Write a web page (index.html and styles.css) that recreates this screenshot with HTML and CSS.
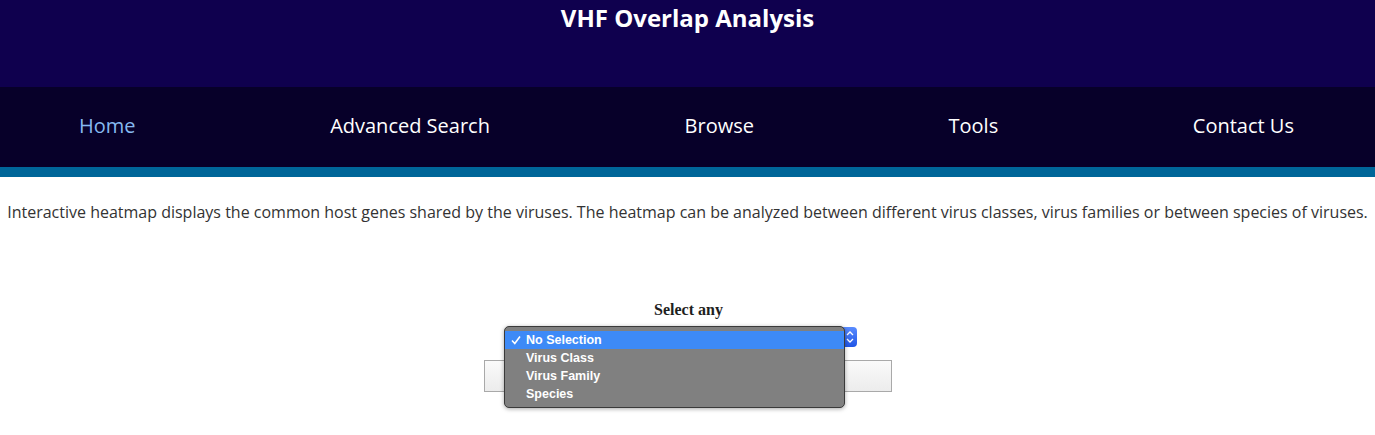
FILE: index.html
```html
<!DOCTYPE html>
<html lang="en">
<head>
    <meta charset="UTF-8">
    <meta name="viewport" content="width=device-width, initial-scale=1.0">
    <title>VHF Overlap Analysis</title>
    <link rel="stylesheet" href="styles.css">
</head>
<body>
    <header class="top">
        <h1>VHF Overlap Analysis</h1>
    </header>
    <nav class="menu">
        <a href="#" class="active">Home</a>
        <a href="#">Advanced Search</a>
        <a href="#">Browse</a>
        <a href="#">Tools</a>
        <a href="#">Contact Us</a>
    </nav>

    <p class="intro">Interactive heatmap displays the common host genes shared by the viruses. The heatmap can be analyzed between different virus classes, virus families or between species of viruses.</p>

    <div class="picker">
        <h4>Select any</h4>
        <div class="select">
            <span class="stepper">
                <svg width="8" height="14" viewBox="0 0 8 14">
                    <path d="M1 5 L4 2 L7 5 M1 9 L4 12 L7 9" fill="none" stroke="#fff" stroke-width="1.3"/>
                </svg>
            </span>
            <!-- open dropdown -->
            <ul class="options">
                <li class="checked">
                    <svg class="tick" width="10" height="10" viewBox="0 0 10 10">
                        <path d="M1 5.5 L3.8 8.5 L9 1.5" fill="none" stroke="#fff" stroke-width="1.6"/>
                    </svg>
                    No Selection
                </li>
                <li>Virus Class</li>
                <li>Virus Family</li>
                <li>Species</li>
            </ul>
        </div>
        <div class="result"></div>
    </div>
</body>
</html>
```

FILE: styles.css
```css
*{
    margin: 0;
    padding: 0;
    box-sizing: border-box;
}
body{
    font-family: "Open Sans", sans-serif;
    color: #333;
    background: #fff;
    min-height: 100vh;
}
.top{
    height: 87px;
    background-color: #0f004e;
    text-align: center;
}
.top h1{
    color: #fff;
    font-size: 24px;
    font-weight: 700;
    line-height: 36px;
}
.menu{
    height: 90px;
    background-color: #070029;
    border-bottom: 10px solid #006699;
    display: flex;
    justify-content: space-between;
    align-items: center;
    padding: 0 81px 3px 79px;
}
.menu a{
    color: #fff;
    text-decoration: none;
    font-size: 20px;
}
.menu a.active{
    color: #86b9f0;
}
.intro{
    text-align: center;
    font-size: 16px;
    line-height: 22px;
    margin-top: 24px;
}
.picker{
    margin-top: 78px;
    padding-bottom: 40px;
    display: flex;
    flex-direction: column;
    align-items: center;
}
.picker h4{
    font-family: "Liberation Serif", serif;
    font-size: 16px;
    line-height: 18px;
    color: #1e1e1e;
    margin-left: 2px;
}
.select{
    position: relative;
    width: 352px;
    height: 20px;
    margin-top: 8px;
    margin-left: -13px;
    background: #fff;
}
.stepper{
    position: absolute;
    right: 0;
    top: 0;
    width: 15px;
    height: 20px;
    background: linear-gradient(#5a8cff, #1f55e6);
    border-radius: 0 4px 4px 0;
    display: flex;
    align-items: center;
    justify-content: center;
}
.options{
    position: absolute;
    left: -1px;
    top: -1px;
    width: 341px;
    height: 82px;
    list-style: none;
    background: #808080;
    border: 1px solid #3a3a3a;
    border-radius: 5px;
    padding-top: 4px;
    box-shadow: 0 1px 4px rgba(0,0,0,0.35);
    font-family: "Liberation Sans", sans-serif;
    font-size: 12.5px;
    font-weight: 700;
    color: #fff;
    z-index: 2;
}
.options li{
    height: 18px;
    line-height: 18px;
    padding-left: 21px;
}
.options li.checked{
    background: #3d8af7;
    position: relative;
}
.tick{
    position: absolute;
    left: 6px;
    top: 4px;
}
.result{
    width: 408px;
    height: 32px;
    margin-top: 13px;
    border: 1px solid #a9a9a9;
    background: linear-gradient(#fafafa, #ececec);
}
```
